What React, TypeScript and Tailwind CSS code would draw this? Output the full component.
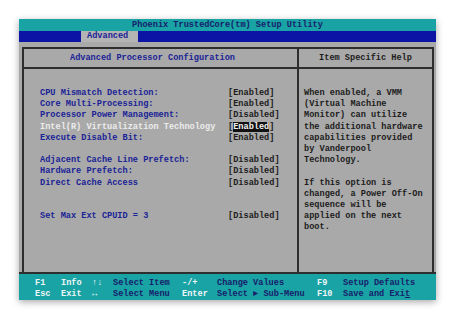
import React from 'react';

const rows: { label: string; value: string; active?: boolean }[] = [
  { label: 'CPU Mismatch Detection:', value: 'Enabled' },
  { label: 'Core Multi-Processing:', value: 'Enabled' },
  { label: 'Processor Power Management:', value: 'Disabled' },
  { label: 'Intel(R) Virtualization Technology', value: 'Enabled', active: true },
  { label: 'Execute Disable Bit:', value: 'Enabled' },
  { label: '', value: '' },
  { label: 'Adjacent Cache Line Prefetch:', value: 'Disabled' },
  { label: 'Hardware Prefetch:', value: 'Disabled' },
  { label: 'Direct Cache Access', value: 'Disabled' },
  { label: '', value: '' },
  { label: '', value: '' },
  { label: 'Set Max Ext CPUID = 3', value: 'Disabled' },
];

const help = [
  'When enabled, a VMM',
  '(Virtual Machine',
  'Monitor) can utilize',
  'the additional hardware',
  'capabilities provided',
  'by Vanderpool',
  'Technology.',
  '',
  'If this option is',
  'changed, a Power Off-On',
  'sequence will be',
  'applied on the next',
  'boot.',
];

const footer = [
  ['F1', 'Info', '↑↓', 'Select Item', '-/+', 'Change Values', 'F9', 'Setup Defaults'],
  ['Esc', 'Exit', '↔', 'Select Menu', 'Enter', 'Select ► Sub-Menu', 'F10', 'Save and Exi'],
];

const colWidths = ['w-[26px]', 'w-[31px]', 'w-[21px]', 'w-[69px]', 'w-[35px]', 'w-[100px]', 'w-[26px]', ''];

export default function App() {
  return (
    <div className="w-[456px] h-[320px] bg-white pt-[19px] pl-[19px] overflow-hidden">
      <div
        className="w-[417px] h-[281px] flex flex-col shadow-[0_2px_7px_rgba(0,0,0,0.35)] font-bold text-[8.6px] whitespace-pre"
        style={{ fontFamily: '"Liberation Mono", "DejaVu Sans Mono", monospace' }}
      >
        {/* title */}
        <div className="h-[12px] bg-[#19a3a5] text-[#17206a] flex items-center justify-center leading-none">
          Phoenix TrustedCore(tm) Setup Utility
        </div>

        {/* menu bar */}
        <div className="h-[11px] bg-[#0b14a4] flex">
          <div className="ml-[62px] w-[57px] bg-[#b4b4b4] text-[#1a2396] pl-[6px] flex items-center leading-none">
            Advanced
          </div>
        </div>

        {/* main area */}
        <div className="flex-1 bg-[#a9a9a9] pt-[5px] pl-[3px] pr-[2px] flex">
          <div className="flex-1 border-2 border-b-0 border-[#2e2e2e] flex flex-col">
            <div className="h-[20px] flex border-b-2 border-[#2e2e2e]">
              <div className="w-[275px] border-r-2 border-[#2e2e2e] flex items-center justify-center text-[#1a2396] pr-[16px]">
                Advanced Processor Configuration
              </div>
              <div className="flex-1 flex items-center justify-center text-[#1c1c1c]">
                Item Specific Help
              </div>
            </div>
            <div className="flex-1 flex">
              <div className="w-[275px] border-r-2 border-[#2e2e2e] pt-[19px] pl-[16px] leading-[11.2px]">
                {rows.map((r, i) => (
                  <div key={i} className="flex h-[11.2px]">
                    <span className={`w-[188px] ${r.active ? 'text-[#ececec]' : 'text-[#1a2396]'}`}>{r.label}</span>
                    {r.value && (
                      <span className="text-[#1c1c1c]">
                        [
                        <span className={r.active ? 'bg-[#111] text-[#f2f2f2]' : ''}>{r.value}</span>]
                      </span>
                    )}
                  </div>
                ))}
              </div>
              <div className="flex-1 pt-[19px] pl-[5px] leading-[11.2px] text-[#1c1c1c]">
                {help.map((l, i) => (
                  <div key={i} className="h-[11.2px]">{l}</div>
                ))}
              </div>
            </div>
          </div>
        </div>

        {/* footer */}
        <div className="h-[28px] bg-[#19a3a5] border-t-2 border-[#2e2e2e] pt-[4px] pl-[16px] leading-[11px]">
          {footer.map((row, ri) => (
            <div key={ri} className="flex h-[11px]">
              {row.map((t, ci) => (
                <span
                  key={ci}
                  className={`${colWidths[ci]} ${ci % 2 === 0 || ci === 1 ? 'text-[#eef6f6]' : 'text-[#17206a]'}`}
                >
                  {t}
                  {ri === 1 && ci === 7 && <span className="underline underline-offset-1">t</span>}
                </span>
              ))}
            </div>
          ))}
        </div>
      </div>
    </div>
  );
}
